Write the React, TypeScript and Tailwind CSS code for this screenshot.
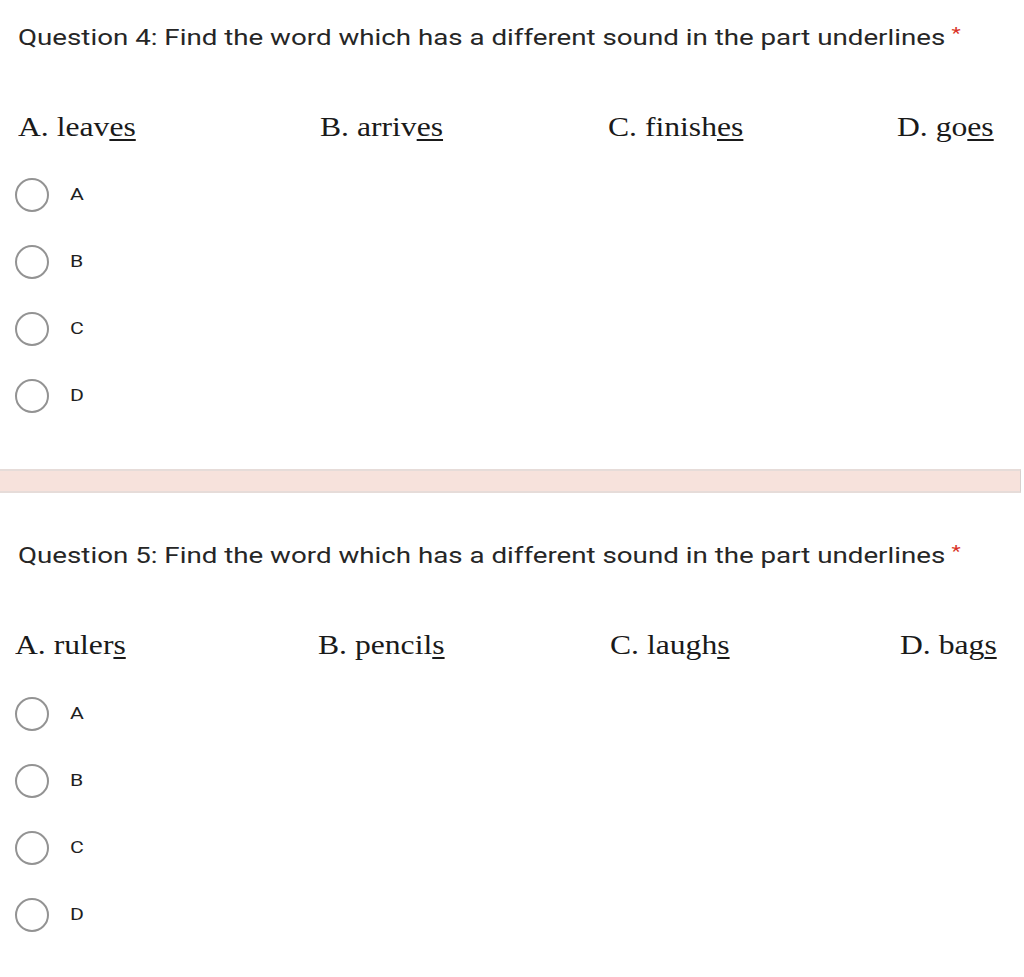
const questions = [
  {
    title: 'Question 4: Find the word which has a different sound in the part underlines',
    words: [
      { label: 'A. ', stem: 'leav', mark: 'es' },
      { label: 'B. ', stem: 'arriv', mark: 'es' },
      { label: 'C. ', stem: 'finish', mark: 'es' },
      { label: 'D. ', stem: 'go', mark: 'es' },
    ],
    cols: 'grid-cols-[302px_288px_289px_1fr] pl-[18px]',
  },
  {
    title: 'Question 5: Find the word which has a different sound in the part underlines',
    words: [
      { label: 'A. ', stem: 'ruler', mark: 's' },
      { label: 'B. ', stem: 'pencil', mark: 's' },
      { label: 'C. ', stem: 'laugh', mark: 's' },
      { label: 'D. ', stem: 'bag', mark: 's' },
    ],
    cols: 'grid-cols-[303px_292px_290px_1fr] pl-[15px]',
  },
]

const choices = ['A', 'B', 'C', 'D']

function Question({ q, first }: { q: (typeof questions)[number]; first: boolean }) {
  return (
    <section className={first ? 'h-[469px] pt-[22px]' : 'h-[484px] pt-[47px]'}>
      {/* Title */}
      <div className="h-[30px] flex items-center pl-[18px]">
        <span className="inline-block origin-left scale-x-[1.26] whitespace-nowrap font-['Roboto',sans-serif] text-[22px] text-[#262626]">
          {q.title}
          <span className="text-[#d93025] ml-[5px] text-[17px] relative -top-[6px]">*</span>
        </span>
      </div>

      {/* Words */}
      <div className={`grid ${q.cols} h-[30px] items-center ${first ? 'mt-[54px]' : 'mt-[54px]'}`}>
        {q.words.map((w) => (
          <div key={w.label} className="whitespace-nowrap">
            <span className="inline-block origin-left scale-x-[1.13] font-['Liberation_Serif',serif] text-[28px] text-[#1a1a1a]">
              {w.label}
              {w.stem}
              <span className="underline decoration-[2px] underline-offset-[3px]">{w.mark}</span>
            </span>
          </div>
        ))}
      </div>

      {/* Radios */}
      <div className={first ? 'mt-[25px]' : 'mt-[26px]'}>
        {choices.map((c) => (
          <div key={c} className="h-[67px] flex items-center pl-[15px]">
            <div className="w-[34px] h-[34px] rounded-full border-[2.5px] border-[#939393] shrink-0" />
            <span className="ml-[21px] inline-block origin-left scale-x-[1.25] font-['Roboto',sans-serif] text-[17px] text-[#1f1f1f]">
              {c}
            </span>
          </div>
        ))}
      </div>
    </section>
  )
}

export default function App() {
  return (
    <div className="w-[1024px] h-[977px] bg-white overflow-hidden">
      <Question q={questions[0]} first />
      {/* Divider */}
      <div className="h-[24px] w-[1021px] bg-[#f7e2dc] border-y-2 border-[#e6dcd9] border-r border-r-[#d8d0ce]" />
      <Question q={questions[1]} first={false} />
    </div>
  )
}
